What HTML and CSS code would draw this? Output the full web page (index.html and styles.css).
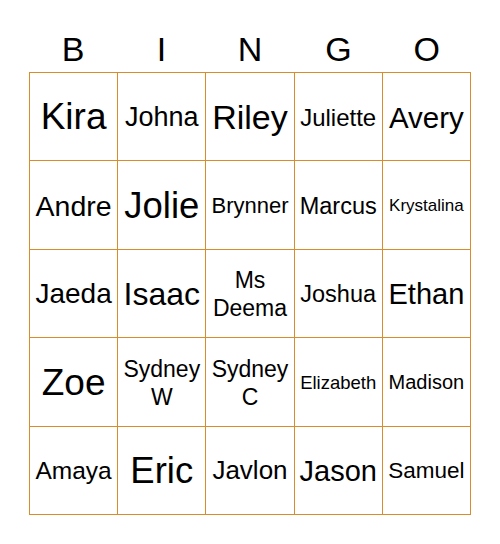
FILE: index.html
```html
<!DOCTYPE html>
<html>
<head>
<meta charset="utf-8">
<link rel="stylesheet" href="styles.css">
</head>
<body>
<div class="card">
  <div class="head">
    <span>B</span><span>I</span><span>N</span><span>G</span><span>O</span>
  </div>
  <div class="grid">
    <div class="cell" style="font-size:37px">Kira</div>
    <div class="cell" style="font-size:27px">Johna</div>
    <div class="cell" style="font-size:34px">Riley</div>
    <div class="cell" style="font-size:24px">Juliette</div>
    <div class="cell" style="font-size:29.5px">Avery</div>

    <div class="cell" style="font-size:28.5px">Andre</div>
    <div class="cell" style="font-size:36.5px">Jolie</div>
    <div class="cell" style="font-size:22px">Brynner</div>
    <div class="cell" style="font-size:23.5px">Marcus</div>
    <div class="cell" style="font-size:17px">Krystalina</div>

    <div class="cell" style="font-size:28px">Jaeda</div>
    <div class="cell" style="font-size:32px">Isaac</div>
    <div class="cell multi" style="font-size:23px">Ms Deema</div>
    <div class="cell" style="font-size:23.5px">Joshua</div>
    <div class="cell" style="font-size:29px">Ethan</div>

    <div class="cell" style="font-size:37px">Zoe</div>
    <div class="cell multi" style="font-size:23px">Sydney W</div>
    <div class="cell multi" style="font-size:23px">Sydney C</div>
    <div class="cell" style="font-size:18.5px">Elizabeth</div>
    <div class="cell" style="font-size:20px">Madison</div>

    <div class="cell" style="font-size:24.5px">Amaya</div>
    <div class="cell" style="font-size:36.5px">Eric</div>
    <div class="cell" style="font-size:26px">Javlon</div>
    <div class="cell" style="font-size:29px">Jason</div>
    <div class="cell" style="font-size:22.5px">Samuel</div>
  </div>
</div>
</body>
</html>
```

FILE: styles.css
```css
html, body {
  margin: 0;
  padding: 0;
  background: #ffffff;
}
body {
  font-family: "Liberation Sans", Arial, sans-serif;
  color: #000000;
}
.card {
  width: 442px;
  margin-left: 29px;
}
.head {
  display: grid;
  grid-template-columns: repeat(5, 1fr);
  padding-top: 26px;
  height: 46px;
  line-height: 46px;
  font-size: 34px;
  text-align: center;
}
.grid {
  display: grid;
  grid-template-columns: repeat(5, 1fr);
  grid-template-rows: repeat(5, 1fr);
  width: 442px;
  height: 443px;
  box-sizing: border-box;
  border-left: 1px solid #d98c2c;
  border-top: 1px solid #d98c2c;
}
.cell {
  display: flex;
  align-items: center;
  justify-content: center;
  text-align: center;
  border-right: 1px solid #d98c2c;
  border-bottom: 1px solid #d98c2c;
  line-height: 1.15;
  padding-top: 2px;
  overflow: hidden;
}
.multi {
  line-height: 1.22;
  padding: 2px 6px 0;
}
```
